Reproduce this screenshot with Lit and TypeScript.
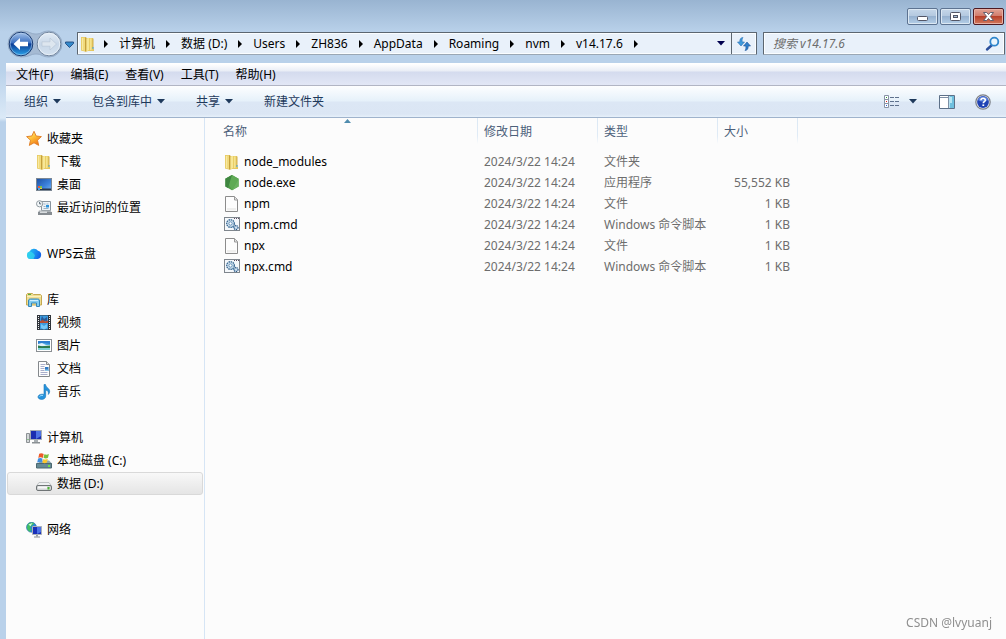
import { LitElement, html, css, svg, nothing, TemplateResult } from "lit";
import { customElement, property } from "lit/decorators.js";
import { classMap } from "lit/directives/class-map.js";

type IconName = string;

const folder = svg`
  <path d="M1 1h5v1h7v10l1 1v2H8l-2 .8L1 14.500z" fill="#e3c55c"/>
  <path d="M1.500 1.500H5V15l-3.500-.8z" fill="#f1da7c"/>
  <path d="M2 2h1v12H2z" fill="#f8e9a2"/>
  <path d="M5 1.500h1.500V15L5 15.500z" fill="#c5a03c"/>
  <path d="M6.500 2.500L9 1.800V14l-2.500 1.500z" fill="#f7e796"/>
  <path d="M9 2h3.500v12.500H8L9 14z" fill="#e9ce66"/>
  <path d="M10 2.500h1.500V14H10z" fill="#f5e38f"/>
  <path d="M12.500 2.500h1V12h-1z" fill="#cfae4c"/>
  <path d="M12.500 11h1v2h-1z" fill="#3d9fdc"/>`;

const page = svg`
  <path d="M1.500.5h9l3 3v12h-12z" fill="#fdfdfd" stroke="#8c8c8c"/>
  <path d="M3 12h9v2.500H3z" fill="#efefee"/>
  <path d="M10.500.5v3.500h3" fill="#e4e4e4" stroke="#9a9a9a"/>`;

const script = svg`
  <rect x=".5" y=".5" width="15" height="13" fill="#f5f8fb" stroke="#7f868d"/>
  <path d="M10 1.500h1m1 0h1m1 0h1" stroke="#5e4d62"/>
  <circle cx="6.500" cy="6.500" r="3.800" fill="#dceaf5" stroke="#3e6d96" stroke-width="1.400" stroke-dasharray="1.500 .7"/>
  <circle cx="6.500" cy="6.500" r="1.700" fill="#fff" stroke="#5b8cb5"/>
  <circle cx="12" cy="10.500" r="2" fill="#cfe1f0" stroke="#2f5d8a" stroke-width="1.300" stroke-dasharray="1.200 .6"/>
  <path d="M8 9.500l2 1.500" stroke="#5b8cb5"/>`;

const icons: Record<IconName, TemplateResult> = {
  folder,
  page,
  script,
  star: svg`
    <defs><linearGradient id="g" x2=".6" y2="1"><stop stop-color="#fff3a0"/><stop offset=".5" stop-color="#ffc23a"/><stop offset="1" stop-color="#f07818"/></linearGradient></defs>
    <path d="M8 .3l2.200 4.700 5.200.6-3.900 3.600 1.200 5.200L8 11.800l-4.700 2.600 1.200-5.200L.6 5.600l5.200-.6z" fill="url(#g)" stroke="#df7d24" stroke-width=".9" stroke-linejoin="round"/>`,
  desktop: svg`
    <defs><linearGradient id="g" x2="1" y2="1"><stop stop-color="#1d4ea0"/><stop offset=".6" stop-color="#3c83dc"/><stop offset="1" stop-color="#79b1ee"/></linearGradient></defs>
    <rect x=".5" y="1.500" width="15" height="12" fill="url(#g)" stroke="#7b8794"/>
    <path d="M1 11.500h14V13H1z" fill="#26374e"/>
    <path d="M2 9h2v2H2z" fill="#e6603a"/><path d="M4 9h2v2H4z" fill="#7cc14a"/><path d="M2 11h2v2H2z" fill="#4aa3ee"/><path d="M4 11h2v1H4z" fill="#f6cf4a"/>`,
  recent: svg`
    <path d="M5.500 1.500h9v9h-9z" fill="#eef3f7" stroke="#8a949d"/>
    <path d="M7.500 4h2m1 0h2M7.500 6.500h2m-2 2h5" stroke="#9bb3c8"/>
    <path d="M10 5h3v2.500h-3z" fill="#2d93dc"/>
    <path d="M3 10.500h11l2 2v2H2v-2z" fill="#a9afb4"/><path d="M2 12h14v3H2z" fill="#868c91"/>
    <path d="M4 11.500h7V13H4z" fill="#d8dcdf"/>
    <circle cx="3.600" cy="3.800" r="3.100" fill="#f4f8fa" stroke="#8f999f"/>
    <path d="M3.600 1.900v2h1.600" fill="none" stroke="#4a5a66" stroke-width=".9"/>`,
  cloud: svg`
    <defs><linearGradient id="g" x2="1" y2=".3"><stop stop-color="#23c8ee"/><stop offset=".5" stop-color="#1da0f2"/><stop offset="1" stop-color="#1467e8"/></linearGradient></defs>
    <path d="M4.500 13a3.800 3.800 0 0 1-.9-7.400A4.800 4.800 0 0 1 12 4.800a4.200 4.200 0 0 1-.3 8.200z" fill="url(#g)"/>
    <path d="M3.600 5.600c3 .2 4.200 2.200 5.400 3.900L7.500 13h-3a3.800 3.800 0 0 1-.9-7.400z" fill="#35dcec" opacity=".7"/>`,
  library: svg`
    <path d="M.5 2.500l1-1h5l1 1h7l1 1v9.500h-15z" fill="#efdd92" stroke="#c4a951"/>
    <path d="M1 4.500h14" stroke="#fbf1bd"/><path d="M2 2.500h3" stroke="#55b13c"/>
    <path d="M2.500 14.500V9c0-1.500.7-2 2-2h7c1.300 0 2 .5 2 2v5.500h-3V11h-5v3.500z" fill="#83cdf0" stroke="#3687b8"/>
    <path d="M4 8.500h8" stroke="#cdefff"/>`,
  video: svg`
    <path d="M1 0h14v15H1z" fill="#30343a"/><path d="M4 .5h8v6.500H4zM4 8h8v6.500H4z" fill="#3b9be0"/>
    <path d="M2.500 1v14m11-14v14" stroke="#f0f0f0" stroke-dasharray="1 1"/>
    <path d="M6 1l2 3 3-2v4H5V4z" fill="#2d5b96"/><path d="M4 6l3-1 2 1.500 3-1V8H4z" fill="#b74d32"/><path d="M5 9l3 2 3-2v4l-3 1.500L5 13z" fill="#76c7f6"/>`,
  picture: svg`
    <rect x=".5" y="1.500" width="15" height="12" fill="#fff" stroke="#8b8f93"/>
    <path d="M2 3h12v9H2z" fill="#4fa9e8"/><path d="M2 3h12v3L8 5 2 6z" fill="#2d7fd0"/>
    <path d="M2 6l4-1 4 2h4v1H2z" fill="#e2f2fb"/><path d="M2 7.500l4 .8 8-.8V10H2z" fill="#2c7a4a"/><path d="M2 10h12v2H2z" fill="#7fd0d8"/>`,
  document: svg`
    <path d="M2.500.5h8l3 3v12h-11z" fill="#fdfdfd" stroke="#84888c"/><path d="M10.500.5v3h3" fill="#dcdcdc" stroke="#84888c"/>
    <path d="M4.500 3.500h5m-5 2h4m-4 2h4m-4 2h4m-4 2h7m-7 2h7" stroke="#a9aecb"/><path d="M9 6h3.500v4H9z" fill="#2f78c4"/><path d="M9 8.500h3.500V10H9z" fill="#8cc6e8"/>`,
  music: svg`
    <path d="M8 .5h1.500c.3 2.500 2.200 3 3.500 4.800 1.200 1.800.8 3.700-.7 5.200.5-2.500-.6-4-2.600-4.600V12c0 2.200-1.800 3.400-4 3.400C3.500 15.400 2 14.500 2 13c0-2 2.500-3.300 6-2.600z" fill="#2593dc" stroke="#1a75b8" stroke-width=".6"/>
    <path d="M3.500 12.500c.8-1 2-1.200 3.500-1" stroke="#9adcff" fill="none"/>`,
  computer: svg`
    <path d="M.5 3.500h3v9h-3z" fill="#d4d8da" stroke="#8c9194"/><path d="M1.500 9.500h1" stroke="#45a83a"/>
    <path d="M4.500.5h11v9h-11z" fill="#1b2db0" stroke="#a5acb2"/><path d="M10 1h5v5l-5 3z" fill="#4f74e4"/>
    <path d="M8 10h4v2H8z" fill="#a9afb3"/><path d="M6 12h8v1.500H6z" fill="#8b9195"/>`,
  system: svg`
    <path d="M2 10.500l2-3h9l3 3v4.500H0v-4z" fill="#8ea7af"/><path d="M.5 10.500h15v4.500H.5z" fill="#668a94" stroke="#4c6870"/>
    <path d="M12 12h2v2h-2z" fill="#6ee04a"/>
    <path d="M3.200.8C4.700-.2 6.200.2 7.700 1l-.9 3.900c-1.500-.8-3-.8-4.500 0z" fill="#ee5a28"/>
    <path d="M8.400 1.200c1.600.7 3 .6 4.500-.3L12 4.800c-1.600.9-3 .7-4.500 0z" fill="#7cbf3a"/>
    <path d="M2.100 5.600c1.500-.8 3-.7 4.500.1l-.9 3.800c-1.500-.8-3-.8-4.500 0z" fill="#3f8ee0"/>
    <path d="M7.300 5.900c1.600.8 3 .7 4.500-.1l-.9 3.800c-1.500.8-3 .7-4.500-.1z" fill="#fcc72e"/>`,
  drive: svg`
    <path d="M3 6.500h10l2.500 3.500H.5z" fill="#eef0f1" stroke="#b4b8ba" stroke-width=".8"/>
    <rect x=".5" y="9.500" width="15" height="5" rx="1.500" fill="#d3d6d7" stroke="#6f7476"/><path d="M2 10.500h9v2H2z" fill="#f6f7f7"/>
    <path d="M11.500 11h2v2.500h-2z" fill="#4cb534"/>`,
  network: svg`
    <circle cx="5.500" cy="5.300" r="5" fill="#2b86d4" stroke="#2f6ea5" stroke-width=".6"/>
    <path d="M1.500 3c1.500-3 5-3 7-1.500L6 3.500 4 5.500l1.500 2L4 9.800C1 8.500.6 5.500 1.500 3z" fill="#3fbf63"/><path d="M2.500 2.500l4-1.500-2 3.200z" fill="#d8f6e2"/>
    <path d="M6.500 4.500h9v8h-9z" fill="#1a2fb8" stroke="#aab1b8"/><path d="M11 5h4v5l-4 2z" fill="#4c73e6"/>
    <path d="M10 13h2v1.500h-2z" fill="#9aa0a5"/><path d="M8 14.500h6v1H8z" fill="#868c91"/>`,
  node: svg`
    <path d="M8 0l6.600 3.800v7.600L8 15.200 1.400 11.400V3.800z" fill="#4f9a48"/>
    <path d="M8 0l6.600 3.800L8 15.200 1.400 3.800z" fill="#5faa55"/><path d="M8 0L4 13l-2.600-1.600V3.800z" fill="#3f8640"/>
    <path d="M14.600 3.800v7.600L8 15.200z" fill="#6bb260"/>`,
  refresh: svg`
    <path d="M7 1.500C4.200 1.700 3.800 3.500 3.800 6H1.500L5 10l3.500-4H6.200C6 4.200 6 2.800 7 1.500z" fill="#3f9bdc" stroke="#2a6fb4" stroke-width=".6"/>
    <path d="M9 14.500c2.800-.2 3.200-2 3.200-4.500h2.300L11 6l-3.500 4h2.300c.2 1.800.2 3.200-.8 4.500z" fill="#2f7fca" stroke="#1f559c" stroke-width=".6"/>`,
  search: svg`
    <path d="M7 9l-5 4.500" stroke="#2b4f9c" stroke-width="2.400" stroke-linecap="round"/>
    <circle cx="9.300" cy="5.700" r="4" fill="#eaf5fd" stroke="#2f86cc" stroke-width="1.800"/>`,
  view: svg`
    <path d="M.5 1.500h4v4h-4zM.5 5.500h4v4h-4zM.5 9.500h4v4h-4z" fill="#fff" stroke="#8792a5"/>
    <path d="M2 3.500h1" stroke="#2b9a30"/><path d="M2 7.500h1" stroke="#e0201a"/><path d="M2 11.500h1" stroke="#2060d8"/>
    <path d="M6 3.500h4m1 0h4M6 7.500h4m1 0h4M6 11.500h4m1 0h4" stroke="#5f728e"/>`,
  pane: svg`
    <path d="M.5 1.500h15v13H.5z" fill="#fff" stroke="#5c7088"/><path d="M1 3.500h9M9.500 2v12" stroke="#7e90a6"/>
    <path d="M10.500 2h4.500v12h-4.500z" fill="#6fc0df"/><path d="M11 3h2v6h-2z" fill="#b8e6f3"/>`,
  help: svg`
    <circle cx="8" cy="8" r="7.200" fill="#e6e9ee" stroke="#7c8088" stroke-width="1.200"/><circle cx="8" cy="8" r="5.900" fill="#1f42b4"/>
    <path d="M3 6a5.300 5.300 0 0 1 10 0C10 8 6 8 3 6z" fill="#5e84dc"/>
    <path d="M5.900 6.300C6 4.800 7 4.300 8.100 4.300c1.300 0 2.200.7 2.200 1.900 0 1.500-2 1.500-2 3.100" stroke="#fff" stroke-width="1.600" fill="none"/>
    <path d="M7.400 10.400h1.800V12H7.400z" fill="#fff"/>`,
};

@customElement("x-icon")
export class XIcon extends LitElement {
  @property() name = "";
  static styles = css`
    :host { display: inline-flex; flex: none; }
    .glyph { display: block; width: 16px; height: 16px; }
  `;
  render() {
    return html`<svg class="glyph" viewBox="0 0 16 16" fill="none" aria-hidden="true">${icons[this.name] ?? nothing}</svg>`;
  }
}

interface Place { label: string; icon: string; selected?: boolean }
interface Entry { name: string; icon: string; type: string; size: string }

const crumbs = ["计算机", "数据 (D:)", "Users", "ZH836", "AppData", "Roaming", "nvm", "v14.17.6"];
const menus = ["文件(F)", "编辑(E)", "查看(V)", "工具(T)", "帮助(H)"];
const commands = [
  { label: "组织", menu: true },
  { label: "包含到库中", menu: true },
  { label: "共享", menu: true },
  { label: "新建文件夹", menu: false },
];
const places: { head: Place; items: Place[] }[] = [
  {
    head: { label: "收藏夹", icon: "star" },
    items: [
      { label: "下载", icon: "folder" },
      { label: "桌面", icon: "desktop" },
      { label: "最近访问的位置", icon: "recent" },
    ],
  },
  { head: { label: "WPS云盘", icon: "cloud" }, items: [] },
  {
    head: { label: "库", icon: "library" },
    items: [
      { label: "视频", icon: "video" },
      { label: "图片", icon: "picture" },
      { label: "文档", icon: "document" },
      { label: "音乐", icon: "music" },
    ],
  },
  {
    head: { label: "计算机", icon: "computer" },
    items: [
      { label: "本地磁盘 (C:)", icon: "system" },
      { label: "数据 (D:)", icon: "drive", selected: true },
    ],
  },
  { head: { label: "网络", icon: "network" }, items: [] },
];
const entries: Entry[] = [
  { name: "node_modules", icon: "folder", type: "文件夹", size: "" },
  { name: "node.exe", icon: "node", type: "应用程序", size: "55,552 KB" },
  { name: "npm", icon: "page", type: "文件", size: "1 KB" },
  { name: "npm.cmd", icon: "script", type: "Windows 命令脚本", size: "1 KB" },
  { name: "npx", icon: "page", type: "文件", size: "1 KB" },
  { name: "npx.cmd", icon: "script", type: "Windows 命令脚本", size: "1 KB" },
];

const down = html`<svg class="down" viewBox="0 0 8 5" aria-hidden="true"><path d="M0 0h8L4 4.500z" fill="currentColor" /></svg>`;
const right = html`<svg class="right" viewBox="0 0 4 8" aria-hidden="true"><path d="M0 0l4 4-4 4z" fill="#000" /></svg>`;

@customElement("app-root")
export class AppRoot extends LitElement {
  static styles = css`
    :host {
      display: flex;
      flex-direction: column;
      box-sizing: border-box;
      min-height: 100vh;
      padding-left: 6px;
      background: linear-gradient(#99b4d1 0, #b9d1ea 32px, #b9d1ea 70px, #dbe9f7 118px, #b9d1ea 122px);
      font: 12px/16px "Noto Sans", "Noto Sans CJK SC", sans-serif;
      color: #000;
    }
    *, *::before { box-sizing: border-box; }
    button, input { font: inherit; color: inherit; margin: 0; padding: 0; border: 0; background: none; }
    a { color: inherit; text-decoration: none; }
    ul { list-style: none; margin: 0; padding: 0; }
    .down { display: block; flex: none; width: 8px; height: 5px; }
    .right { display: block; flex: none; width: 4px; height: 8px; }

    .title { display: flex; justify-content: flex-end; gap: 2px; height: 32px; padding: 8px 2px 0 0; }
    .caption {
      display: flex; align-items: center; justify-content: center;
      width: 31px; height: 17px; border: 1px solid #5d7391; border-radius: 2px;
      background: linear-gradient(#c6d7e9 0, #b4c9e0 45%, #97b2d0 50%, #b5cfe8 100%);
      box-shadow: inset 0 0 0 1px #dce8f3;
    }
    .close {
      border-color: #4d1a22; box-shadow: inset 0 0 0 1px #e8b0a4;
      background: linear-gradient(#e0a396 0, #d27c6c 45%, #b8402a 50%, #d27a5e 100%);
    }
    .caption-glyph { display: block; width: 13px; height: 11px; }

    .address { display: flex; align-items: center; height: 31px; padding-bottom: 8px; }
    .travel { display: block; flex: none; width: 71px; height: 28px; margin-top: 1px; }
    .travel-group { display: flex; flex: none; }
    .field {
      display: flex; align-items: center; height: 23px;
      border: 1px solid #5c6670; border-bottom-color: #9aa7b4; border-radius: 1px;
      background: #e9f1fa; box-shadow: inset 0 0 0 1px #fafdff;
    }
    .path { flex: 1; min-width: 0; padding-left: 2px; }
    .crumbs { display: flex; align-items: center; flex: 1; min-width: 0; padding-left: 8px; gap: 11px; overflow: hidden; }
    .crumb { display: flex; align-items: center; gap: 11px; white-space: nowrap; }
    .drop { display: flex; align-items: center; justify-content: center; width: 20px; height: 21px; color: #00004e; }
    .reload { display: flex; align-items: center; justify-content: center; width: 25px; height: 21px; border-left: 1px solid #5c6670; }
    .search { width: 242px; margin: 0 1px 0 6px; padding: 0 3px 0 9px; }
    .query { flex: 1; min-width: 0; height: 21px; outline: 0; }
    .query::placeholder { color: #6d6d6d; opacity: 1; font-style: italic; }

    .menus {
      display: flex; align-items: center; gap: 1px; height: 23px; padding-left: 2px;
      border-top: 1px solid #fff; border-bottom: 1px solid #b1b5c4;
      background: linear-gradient(#fff 0, #e9edf6 7px, #d4dbee 8px, #e2e7f6 100%);
    }
    .menu { padding: 0 8px; }
    .commands {
      display: flex; align-items: center; height: 32px; padding: 0 15px 0 18px;
      border-bottom: 1px solid #9fb3cc;
      background: linear-gradient(#fdfeff 0, #e6f1fa 15px, #dce7f5 16px, #dbe6f4 28px, #e6f0fa 31px);
      color: #1e395b;
    }
    .command { display: flex; align-items: center; gap: 5px; margin-right: 31px; }
    .tools { display: flex; align-items: center; margin-left: auto; }
    .tool { display: flex; align-items: center; }
    .view-menu { margin: 0 22px 0 9px; }
    .pane { margin-right: 20px; }

    .main { display: flex; flex: 1; background: #fcfcfc; }
    .side { flex: none; width: 199px; padding: 9px 1px 0; border-right: 1px solid #d6e5f5; }
    .group { margin-bottom: 23px; }
    .place {
      display: flex; align-items: center; gap: 5px; height: 23px;
      padding-left: 18px; border: 1px solid transparent; border-radius: 3px;
    }
    .child { padding-left: 28px; }
    .selected { border-color: #d9d9d9; background: linear-gradient(#f8f8f8, #e5e5e5); }

    .files { flex: 1; min-width: 0; }
    .list { width: 593px; table-layout: fixed; border-collapse: collapse; }
    .name-col { width: 273px; }
    .text-col { width: 120px; }
    .size-col { width: 80px; }
    .heading {
      position: relative; height: 26px; padding: 2px 0 0 6px;
      text-align: left; font-weight: 400; color: #4c607a;
      background: linear-gradient(#dbe8f4, #e0ebf6 70%, #fcfcfc) right / 1px 100% no-repeat;
    }
    .first { padding-left: 18px; }
    .sort { position: absolute; left: 139px; top: 1px; width: 7px; height: 4px; }
    .gap { height: 7px; padding: 0; }
    .cell { height: 21px; padding: 0 0 0 6px; color: #6d6d6d; white-space: nowrap; }
    .name { padding-left: 19px; color: #000; }
    .size { padding: 0 8px 0 0; text-align: right; }
    .file { display: flex; align-items: center; gap: 4px; }
    .mark { position: fixed; right: 14px; bottom: 8px; color: #8f8f8f; }
  `;

  private place(p: Place, child: boolean) {
    return html`<a href="#" class=${classMap({ place: true, child, selected: !!p.selected })}
      ><x-icon name=${p.icon}></x-icon><span>${p.label}</span></a>`;
  }

  render() {
    return html`
      <header class="title">
        <button class="caption" aria-label="最小化">
          <svg class="caption-glyph" viewBox="0 0 13 11"><rect x="1.500" y="5.500" width="10" height="4" rx="1" fill="#fff" stroke="#535666" /></svg>
        </button>
        <button class="caption" aria-label="最大化">
          <svg class="caption-glyph" viewBox="0 0 13 11"><rect x="1.500" y="1.500" width="10" height="8" rx="1" fill="#fff" stroke="#535666" /><rect x="4.500" y="4.500" width="4" height="2" fill="#a8c0d8" stroke="#535666" /></svg>
        </button>
        <button class="caption close" aria-label="关闭">
          <svg class="caption-glyph" viewBox="0 0 13 11"><path d="M1.500 1.500h3.200l1.800 2 1.800-2h3.200L8.300 5.500l3.200 4H8.300l-1.800-2-1.800 2H1.500l3.200-4z" fill="#fff" stroke="#535666" stroke-width=".9" /></svg>
        </button>
      </header>

      <div class="address">
        <button class="travel-group" aria-label="后退 前进">
          <svg class="travel" viewBox="0 0 71 28" aria-hidden="true">
            <defs>
              <linearGradient id="back" x2="0" y2="1"><stop stop-color="#a7c4ea" /><stop offset=".45" stop-color="#3a6fc0" /><stop offset=".5" stop-color="#0c3c94" /><stop offset="1" stop-color="#2ba6ec" /></linearGradient>
              <linearGradient id="fwd" x2="0" y2="1"><stop stop-color="#e4edf6" /><stop offset=".5" stop-color="#c8d7e8" /><stop offset="1" stop-color="#d3e1ef" /></linearGradient>
            </defs>
            <path d="M15 1C24 1 24 4 30 4S36 1 43 1a13 13 0 0 1 0 26C36 27 36 24 30 24S24 27 15 27a13 13 0 0 1 0-26z" fill="#a5bad3" stroke="#8fa6c2" stroke-width=".8" />
            <circle cx="15" cy="14" r="11.800" fill="url(#back)" stroke="#193a70" />
            <circle cx="15" cy="14" r="10.800" fill="none" stroke="#b9d4f0" stroke-width=".8" opacity=".7" />
            <path d="M7.500 14L14 8v3.800h8v4.400h-8V20z" fill="#fff" />
            <circle cx="43" cy="14" r="11.800" fill="url(#fwd)" stroke="#71849c" />
            <circle cx="43" cy="14" r="10.800" fill="none" stroke="#eef4fa" stroke-width=".8" />
            <path d="M50.500 14L44 8v3.800h-8v4.400h8V20z" fill="#dde6ef" stroke="#b3c2d3" stroke-width=".6" />
            <path d="M59.500 12h8v1.500l-4 4-4-4z" fill="#3489cb" stroke="#1f4a80" stroke-width=".9" />
          </svg>
        </button>
        <div class="field path">
          <x-icon name="folder"></x-icon>
          <nav class="crumbs" aria-label="路径">
            ${right}${crumbs.map((c) => html`<button class="crumb"><span>${c}</span>${right}</button>`)}
          </nav>
          <button class="drop" aria-label="以前的位置">${down}</button>
          <button class="reload" aria-label="刷新"><x-icon name="refresh"></x-icon></button>
        </div>
        <label class="field search">
          <input class="query" type="text" aria-label="搜索" placeholder="搜索 v14.17.6" />
          <x-icon name="search"></x-icon>
        </label>
      </div>

      <nav class="menus">${menus.map((m) => html`<button class="menu">${m}</button>`)}</nav>

      <div class="commands">
        ${commands.map((c) => html`<button class="command"><span>${c.label}</span>${c.menu ? down : nothing}</button>`)}
        <div class="tools">
          <button class="tool" aria-label="更改视图"><x-icon name="view"></x-icon></button>
          <button class="tool view-menu" aria-label="更多选项">${down}</button>
          <button class="tool pane" aria-label="预览窗格"><x-icon name="pane"></x-icon></button>
          <button class="tool" aria-label="帮助"><x-icon name="help"></x-icon></button>
        </div>
      </div>

      <div class="main">
        <nav class="side">
          ${places.map((g) => html`<div class="group">
            ${this.place(g.head, false)}
            <ul>${g.items.map((p) => html`<li>${this.place(p, true)}</li>`)}</ul>
          </div>`)}
        </nav>
        <main class="files">
          <table class="list">
            <colgroup><col class="name-col" /><col class="text-col" /><col class="text-col" /><col class="size-col" /></colgroup>
            <thead>
              <tr>
                <th class="heading first">名称<svg class="sort" viewBox="0 0 7 4" aria-hidden="true"><path d="M0 4l3.500-4L7 4z" fill="#4f8cae" /></svg></th>
                <th class="heading">修改日期</th>
                <th class="heading">类型</th>
                <th class="heading">大小</th>
              </tr>
            </thead>
            <tbody>
              <tr><td class="gap" colspan="4"></td></tr>
              ${entries.map((e) => html`<tr>
                <td class="cell name"><a class="file" href="#"><x-icon name=${e.icon}></x-icon><span>${e.name}</span></a></td>
                <td class="cell">2024/3/22 14:24</td>
                <td class="cell">${e.type}</td>
                <td class="cell size">${e.size}</td>
              </tr>`)}
            </tbody>
          </table>
        </main>
      </div>
      <div class="mark">CSDN @lvyuanj</div>
    `;
  }
}
